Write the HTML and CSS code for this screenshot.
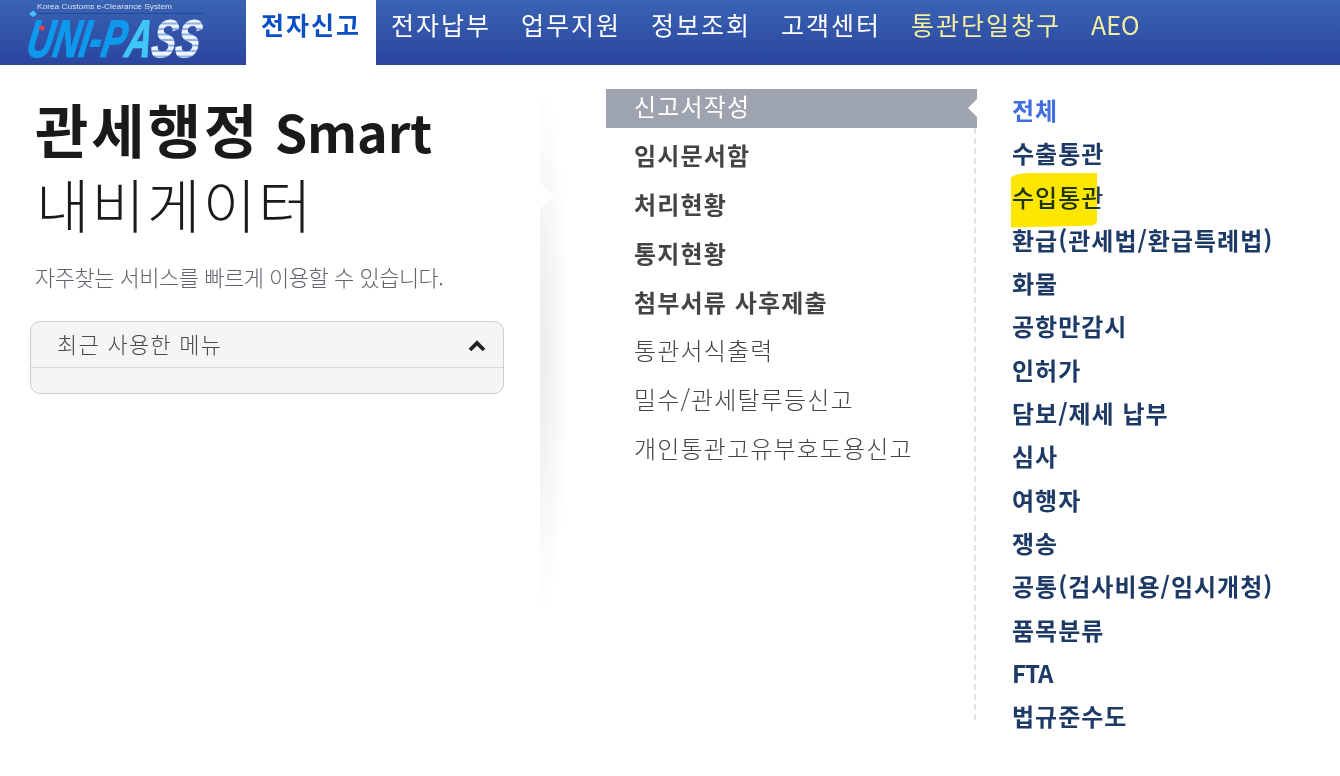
FILE: index.html
```html
<!DOCTYPE html>
<html lang="ko">
<head>
<meta charset="utf-8">
<title>UNI-PASS</title>
<link rel="stylesheet" href="styles.css">
</head>
<body>
<header class="topbar">
  <a class="logo" href="#">
    <svg width="246" height="65" viewBox="0 0 246 65">
      <defs>
        <pattern id="stripes" width="10" height="5.5" patternUnits="userSpaceOnUse" y="1">
          <rect width="10" height="5.5" fill="#f0f5fd"/>
          <rect width="10" height="2" y="3.5" fill="#8fb0e2"/>
        </pattern>
        <filter id="soft" x="-5%" y="-5%" width="110%" height="110%"><feGaussianBlur stdDeviation="0.5"/></filter>
      </defs>
      <g filter="url(#soft)">
        <text x="37" y="8.5" class="logo-tag" textLength="135" lengthAdjust="spacingAndGlyphs">Korea Customs e-Clearance System</text>
        <path d="M33 13.5H203" stroke="#1c4aa6" stroke-width="1"/>
        <path d="M29 14l4-3.5 4 3.5-4 3z" fill="#43c4f2"/>
        <text transform="translate(25 56.5) skewX(-10)" class="logo-name" textLength="173" lengthAdjust="spacingAndGlyphs"><tspan class="c-u">UNI-P</tspan><tspan class="c-a">A</tspan><tspan class="c-s">SS</tspan></text>
        <path d="M38 28q4-4 7-1l-2 4q-3-1-5-3z" fill="#e8404e"/>
      </g>
    </svg>
  </a>
  <nav class="gnb">
    <a class="gnb-item active" href="#">전자신고</a>
    <a class="gnb-item" href="#">전자납부</a>
    <a class="gnb-item" href="#">업무지원</a>
    <a class="gnb-item" href="#">정보조회</a>
    <a class="gnb-item" href="#">고객센터</a>
    <a class="gnb-item accent" href="#">통관단일창구</a>
    <a class="gnb-item accent latin" href="#">AEO</a>
  </nav>
</header>
<main class="content">
  <section class="intro">
    <h1 class="title"><strong><span class="title-ko">관세행정</span> <span class="title-en">Smart</span></strong><span class="title-sub">내비게이터</span></h1>
    <p class="lead">자주찾는 서비스를 빠르게 이용할 수 있습니다.</p>
    <div class="recent">
      <div class="recent-head">
        <span class="recent-label">최근 사용한 메뉴</span>
        <svg class="chev" width="18" height="12" viewBox="0 0 18 12"><path d="M2 10l7-7 7 7" fill="none" stroke="#222" stroke-width="3.8"/></svg>
      </div>
      <div class="recent-body"></div>
    </div>
  </section>
  <div class="divider"><i class="divider-arrow"></i></div>
  <ul class="sub">
    <li class="sub-item current">신고서작성</li>
    <li class="sub-item strong">임시문서함</li>
    <li class="sub-item strong">처리현황</li>
    <li class="sub-item strong">통지현황</li>
    <li class="sub-item strong">첨부서류 사후제출</li>
    <li class="sub-item">통관서식출력</li>
    <li class="sub-item">밀수/관세탈루등신고</li>
    <li class="sub-item">개인통관고유부호도용신고</li>
  </ul>
  <ul class="cats">
    <li class="cat selected">전체</li>
    <li class="cat">수출통관</li>
    <li class="cat hit"><span class="cat-text">수입통관</span><span class="marker"></span></li>
    <li class="cat">환급(관세법/환급특례법)</li>
    <li class="cat">화물</li>
    <li class="cat">공항만감시</li>
    <li class="cat">인허가</li>
    <li class="cat">담보/제세 납부</li>
    <li class="cat">심사</li>
    <li class="cat">여행자</li>
    <li class="cat">쟁송</li>
    <li class="cat">공통(검사비용/임시개청)</li>
    <li class="cat">품목분류</li>
    <li class="cat latin">FTA</li>
    <li class="cat">법규준수도</li>
  </ul>
</main>
</body>
</html>
```
FILE: styles.css
```css
* { box-sizing: border-box; }
html, body { margin: 0; padding: 0; height: 776px; overflow: hidden; }
body {
  background: #fff;
  font-family: "Noto Sans CJK KR", "Noto Sans", sans-serif;
  color: #222;
}
ul { list-style: none; margin: 0; padding: 0; }
a { text-decoration: none; }

.topbar {
  display: flex;
  height: 65px;
  background: linear-gradient(#3a63b2, #2a459f);
}
.logo { display: block; width: 246px; height: 65px; flex: none; }
.logo svg { display: block; }
.logo-tag { font: 7px "Liberation Sans", sans-serif; fill: #d5e0f2; }
.logo-name { font: italic 700 53px "Liberation Sans", sans-serif; stroke-width: 1.2px; }
.c-u { fill: #0d9aec; stroke: #0d9aec; }
.c-a { fill: #3fc6f7; stroke: #3fc6f7; }
.c-s { fill: url(#stripes); stroke: url(#stripes); }

.gnb { display: flex; }
.gnb-item {
  padding: 0 15px 17px;
  display: flex;
  align-items: center;
  font-size: 25px;
  line-height: 1;
  letter-spacing: 2px;
  color: #fff;
  white-space: nowrap;
}
.gnb-item.active { background: #fff; color: #0b4fc4; font-weight: 700; }
.gnb-item.accent { color: #f3eea0; }
.gnb-item.latin { letter-spacing: 0; }

.content { display: flex; position: relative; height: 711px; }

.intro { width: 540px; flex: none; padding: 30px 36px 0 30px; }
.title { margin: 0 0 0 5px; font-size: 58px; line-height: 78px; font-weight: 400; color: #1a1a1a; }
.title strong, .title-sub { display: block; white-space: nowrap; }
.title strong { font-weight: 700; line-height: 66px; }
.title-ko { letter-spacing: 3px; }
.title-en { font-size: 52px; letter-spacing: -0.1px; margin-left: -2px; }
.title-sub { font-weight: 300; letter-spacing: 2.2px; margin-left: 1px; }
.lead { margin: 18px 0 0 5px; font-size: 22px; line-height: 32px; color: #62626c; letter-spacing: -0.5px; font-weight: 300; }
.recent { margin-top: 29px; height: 73px; border: 1px solid #ccc; border-radius: 10px; background: #f5f5f5; overflow: hidden; }
.recent-head {
  height: 46px;
  padding: 0 17px 0 26px;
  border-bottom: 1px solid #d8d8d8;
  display: flex;
  justify-content: space-between;
  align-items: center;
  font-size: 22px;
  color: #4a4a4a;
  font-weight: 300;
}
.recent-label { letter-spacing: 1.25px; margin-bottom: 4px; }
.chev { margin-top: 2px; }

.divider {
  width: 30px;
  height: 510px;
  margin-top: 30px;
  flex: none;
  position: relative;
  background: radial-gradient(ellipse 30px 270px at 0 50%, #ebebeb, #fff);
}
.divider-arrow {
  position: absolute;
  left: 0;
  top: 88px;
  width: 14px;
  height: 26px;
  background: #fff;
  clip-path: polygon(0 0, 100% 50%, 0 100%);
}

.sub { width: 371px; margin: 24px 0 0 36px; flex: none; }
.sub-item { height: 38.9px; margin-bottom: 10px; padding-left: 28px; font-size: 24px; line-height: 34px; letter-spacing: 1.15px; color: #444; font-weight: 300; white-space: nowrap; }
.sub-item.strong { font-weight: 700; color: #444; }
.sub-item.current { color: #fff; background: #9da3af; font-weight: 400; position: relative; }
.sub-item.current::after {
  content: "";
  position: absolute;
  right: 0;
  top: 10px;
  width: 9px;
  height: 18px;
  background: #fff;
  clip-path: polygon(100% 0, 0 50%, 100% 100%);
}

.cats { flex: 1; margin: 23px 0 0 -3px; padding: 0 0 0 38px; height: 633px; position: relative; }
.cats::before {
  content: "";
  position: absolute;
  left: 0;
  top: 40px;
  height: 592px;
  border-left: 2px dashed #e2e2e2;
}
.cat { position: relative; height: 43.3px; font-size: 24px; line-height: 43px; font-weight: 700; letter-spacing: 1px; color: #1d3a66; white-space: nowrap; }
.cat.selected { color: #3f6fe0; }
.cat.latin { letter-spacing: -1px; }
.cat.hit { font-weight: 500; }
.marker {
  position: absolute;
  left: -1px;
  top: -2px;
  width: 86px;
  height: 55px;
  background: #ffe600;
  mix-blend-mode: multiply;
  clip-path: polygon(0 8%, 8% 3%, 25% 0, 100% 0, 100% 90%, 96% 96%, 0 100%);
}
```
